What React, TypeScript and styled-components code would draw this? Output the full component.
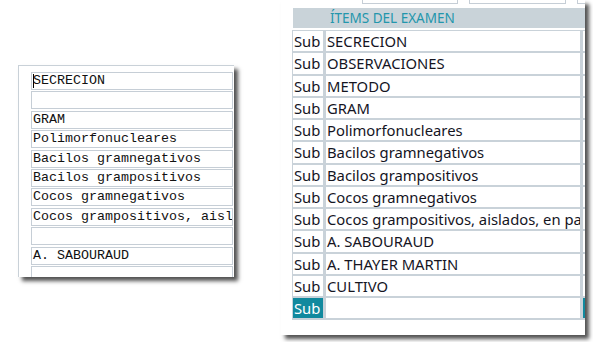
import React from "react";
import styled, { createGlobalStyle } from "styled-components";

const formLines = [
  "SECRECION",
  "",
  "GRAM",
  "Polimorfonucleares",
  "Bacilos gramnegativos",
  "Bacilos grampositivos",
  "Cocos gramnegativos",
  "Cocos grampositivos, aislados, en pares",
  "",
  "A. SABOURAUD",
  "",
];

const items = [
  "SECRECION",
  "OBSERVACIONES",
  "METODO",
  "GRAM",
  "Polimorfonucleares",
  "Bacilos gramnegativos",
  "Bacilos grampositivos",
  "Cocos gramnegativos",
  "Cocos grampositivos, aislados, en pares",
  "A. SABOURAUD",
  "A. THAYER MARTIN",
  "CULTIVO",
  "",
];

const GlobalStyle = createGlobalStyle`
  html, body { margin: 0; padding: 0; background: #fff; }
  body { width: 593px; height: 342px; overflow: hidden; }
`;

export default function App() {
  return (
    <>
      <GlobalStyle />
      <Desk>
        <FormShot>
          {formLines.map((l, i) => (
            <FieldBox key={i}>
              {i === 0 && <Caret />}
              {l}
            </FieldBox>
          ))}
        </FormShot>
        <ListShot>
          <TopInputs>
            <TopInput $w={96} />
            <TopInput $w={97} />
            <TopInput $w={40} />
          </TopInputs>
          <HeaderBar>ÍTEMS DEL EXAMEN</HeaderBar>
          <Table>
            {items.map((it, i) => {
              const sel = i === items.length - 1;
              return (
                <Row key={i}>
                  <SubCell $sel={sel}>Sub</SubCell>
                  <ItemCell>{it}</ItemCell>
                  <ExtraCell $sel={sel} />
                </Row>
              );
            })}
          </Table>
        </ListShot>
      </Desk>
    </>
  );
}

const Desk = styled.div`
  display: flex;
  align-items: flex-start;
  width: 593px;
  height: 342px;
  overflow: hidden;
`;

const FormShot = styled.div`
  margin: 65px 0 0 18px;
  width: 216px;
  height: 212px;
  border-top: 1px solid #c9d1d8;
  border-left: 1px solid #c9d1d8;
  background: #fff;
  box-shadow: 4px 4px 4px rgba(0, 0, 0, 0.68);
  padding: 6px 1px 0 12px;
  box-sizing: border-box;
  overflow: hidden;
  display: flex;
  flex-direction: column;
  gap: 1.4px;
  flex-shrink: 0;
`;

const FieldBox = styled.div`
  flex-shrink: 0;
  height: 18px;
  border: 1px solid #c6ced6;
  box-sizing: border-box;
  font-family: "Liberation Mono", "Courier New", monospace;
  font-size: 13.33px;
  line-height: 16px;
  color: #111;
  padding-left: 1px;
  white-space: nowrap;
  overflow: hidden;
  display: flex;
  align-items: center;
`;

const Caret = styled.span`
  display: inline-block;
  width: 1px;
  height: 14px;
  background: #000;
  margin-right: -1px;
`;

const ListShot = styled.div`
  margin-left: 47px;
  width: 304px;
  height: 335px;
  background: #fff;
  box-shadow: 4px 4px 4px rgba(0, 0, 0, 0.68);
  padding-left: 11px;
  box-sizing: border-box;
  overflow: hidden;
  flex-shrink: 0;
`;

const TopInputs = styled.div`
  display: flex;
  gap: 11px;
  height: 4px;
  padding-left: 70px;
`;

const TopInput = styled.div<{ $w: number }>`
  width: ${({ $w }) => $w}px;
  flex-shrink: 0;
  height: 4px;
  border: 1px solid #c6ced6;
  border-top: none;
  box-sizing: border-box;
`;

const HeaderBar = styled.div`
  margin: 4px 0 0 1px;
  height: 20px;
  background: #c9d3d9;
  color: #2396ac;
  font-family: "Noto Sans", sans-serif;
  font-size: 13.5px;
  line-height: 20px;
  padding-left: 37px;
  white-space: nowrap;
`;

const Table = styled.div`
  margin-top: 2px;
  width: 300px;
  border-top: 1px solid #c9d2d9;
  border-left: 1px solid #c9d2d9;
  font-family: "Noto Sans", sans-serif;
  font-size: 14.8px;
  color: #15151f;
`;

const Row = styled.div`
  display: flex;
  height: 22.25px;
  border-bottom: 2px solid #c9d2d9;
  box-sizing: border-box;
`;

const SubCell = styled.div<{ $sel: boolean }>`
  width: 33px;
  flex-shrink: 0;
  border-right: 3px solid #c9d2d9;
  box-sizing: border-box;
  padding-left: 1px;
  display: flex;
  align-items: center;
  background: ${({ $sel }) => ($sel ? "#11899e" : "#fff")};
  color: ${({ $sel }) => ($sel ? "#fff" : "inherit")};
`;

const ItemCell = styled.div`
  width: 257px;
  flex-shrink: 0;
  border-right: 3px solid #c9d2d9;
  box-sizing: border-box;
  padding-left: 1px;
  display: flex;
  align-items: center;
  white-space: nowrap;
  overflow: hidden;
`;

const ExtraCell = styled.div<{ $sel: boolean }>`
  flex: 1;
  background: ${({ $sel }) => ($sel ? "#11899e" : "#fff")};
`;
